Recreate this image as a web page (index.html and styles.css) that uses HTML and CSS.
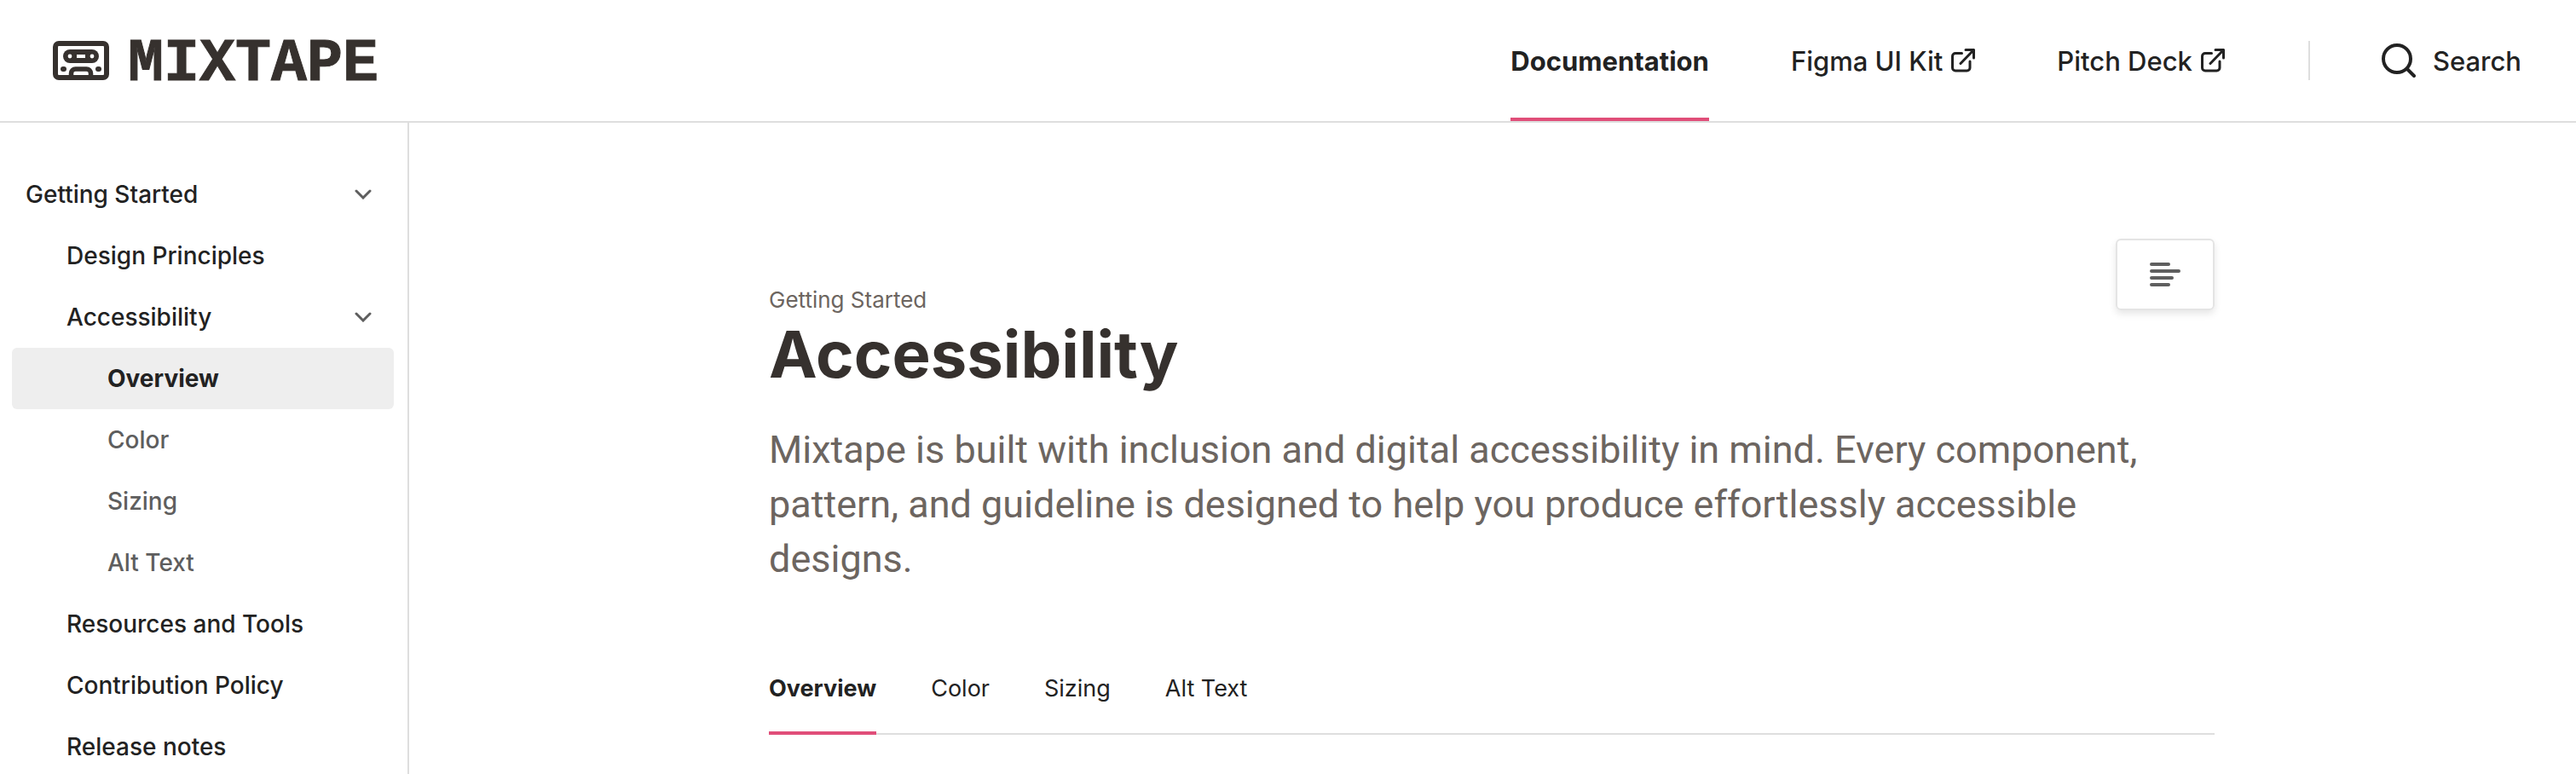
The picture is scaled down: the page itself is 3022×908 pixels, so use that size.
FILE: index.html
```html
<!DOCTYPE html>
<html lang="en">
<head>
  <meta charset="UTF-8" />
  <meta name="viewport" content="width=device-width, initial-scale=1.0"/>
  <title>Accessibility | Mixtape</title>
  <link rel="stylesheet" href="styles.css">
</head>
<body>

<header class="site-header">
  <a class="logo" href="#">
    <svg class="logo-icon" width="66" height="46" viewBox="0 0 66 46" fill="none" aria-hidden="true">
      <rect x="3" y="3" width="60" height="40" rx="4" stroke="currentColor" stroke-width="6"/>
      <rect x="12" y="10" width="42" height="16" rx="8" fill="currentColor"/>
      <circle cx="20" cy="18" r="2.4" fill="#fff"/>
      <circle cx="46" cy="18" r="2.4" fill="#fff"/>
      <rect x="28" y="16" width="10" height="4" fill="#fff"/>
      <rect x="9" y="30" width="7" height="6" rx="3" fill="currentColor"/>
      <rect x="50" y="30" width="7" height="6" rx="3" fill="currentColor"/>
      <path d="M21.500 42v-4a5 5 0 0 1 5-5h13a5 5 0 0 1 5 5v4" stroke="currentColor" stroke-width="5.500"/>
    </svg>
    <span class="logo-text">MIXTAPE</span>
  </a>
  <nav class="main-nav">
    <ul>
      <li><a class="active" href="#docs">Documentation</a></li>
      <li>
        <a href="#figma">Figma UI Kit
          <svg width="28" height="28" viewBox="0 0 28 28" aria-hidden="true"><path d="M12.500 5.500H5a3.500 3.500 0 0 0-3.500 3.500v13.500A3.500 3.500 0 0 0 5 26h13.500a3.500 3.500 0 0 0 3.500-3.500V15M17 1.500h9.500V11M26.500 1.500 11 17.500"/></svg>
        </a>
      </li>
      <li>
        <a href="#pitch">Pitch Deck
          <svg width="28" height="28" viewBox="0 0 28 28" aria-hidden="true"><path d="M12.500 5.500H5a3.500 3.500 0 0 0-3.500 3.500v13.500A3.500 3.500 0 0 0 5 26h13.500a3.500 3.500 0 0 0 3.500-3.500V15M17 1.500h9.500V11M26.500 1.500 11 17.500"/></svg>
        </a>
      </li>
    </ul>
    <button class="search" type="button">
      <svg width="40" height="40" viewBox="0 0 40 40" aria-hidden="true"><circle cx="18" cy="18" r="16"/><path d="m30 30 8 8"/></svg>
      Search
    </button>
  </nav>
</header>

<div class="layout">
  <nav class="sidebar">
    <ul>
      <li>
        <a href="#getting-started">Getting Started
          <svg width="20" height="12" viewBox="0 0 20 12" aria-hidden="true"><path d="m2 2 8 8 8-8"/></svg>
        </a>
        <ul>
          <li><a href="#principles">Design Principles</a></li>
          <li>
            <a href="#accessibility">Accessibility
              <svg width="20" height="12" viewBox="0 0 20 12" aria-hidden="true"><path d="m2 2 8 8 8-8"/></svg>
            </a>
            <ul>
              <li><a class="active" href="#overview">Overview</a></li>
              <li><a href="#color">Color</a></li>
              <li><a href="#sizing">Sizing</a></li>
              <li><a href="#alt-text">Alt Text</a></li>
            </ul>
          </li>
          <li><a href="#resources">Resources and Tools</a></li>
          <li><a href="#contribution">Contribution Policy</a></li>
          <li><a href="#release">Release notes</a></li>
        </ul>
      </li>
    </ul>
  </nav>

  <main class="content">
    <div class="page-head">
      <div class="page-title">
        <p class="crumb">Getting Started</p>
        <h1>Accessibility</h1>
      </div>
      <button class="toc-btn" type="button" aria-label="Table of contents">
        <svg width="36" height="28" viewBox="0 0 36 28" aria-hidden="true"><path d="M2 2h20M2 10h32M2 18h24M2 26h20"/></svg>
      </button>
    </div>
    <p class="lead">Mixtape is built with inclusion and digital accessibility in mind. Every component, pattern, and guideline is designed to help you produce effortlessly accessible designs.</p>
    <nav class="tabs">
      <a class="active" href="#overview">Overview</a>
      <a href="#color">Color</a>
      <a href="#sizing">Sizing</a>
      <a href="#alt-text">Alt Text</a>
    </nav>
  </main>
</div>

</body>
</html>
```
FILE: styles.css
```css
:root {
  --text: #222;
  --heading: #36312e;
  --muted: #6c6560;
  --grey: #5e5e5e;
  --border: #dedede;
  --accent: #e04e79;
}
* {
  box-sizing: border-box;
}
body {
  margin: 0;
  font-family: Inter, "Liberation Sans", sans-serif;
  font-size: 28px;
  color: var(--text);
  background: #fff;
}
a {
  color: inherit;
  text-decoration: none;
}
ul {
  list-style: none;
  margin: 0;
  padding: 0;
}
button {
  font: inherit;
  color: inherit;
  background: none;
  border: none;
  padding: 0;
  cursor: pointer;
}
svg {
  flex: none;
}
.site-header {
  display: flex;
  justify-content: space-between;
  height: 144px;
  padding: 0 64px 0 62px;
  border-bottom: 2px solid var(--border);
}
.logo {
  display: flex;
  align-items: center;
  gap: 22px;
  color: var(--heading);
}
.logo-text {
  padding-top: 10px;
  font-family: "Liberation Mono", monospace;
  font-size: 70px;
  font-weight: bold;
  line-height: 80px;
  -webkit-text-stroke: 1px currentColor;
}
.main-nav {
  display: flex;
  align-items: center;
  font-size: 31px;
  font-weight: 500;
}
.main-nav ul {
  display: flex;
  gap: 96px;
  height: 100%;
}
.main-nav a {
  display: flex;
  align-items: center;
  gap: 10px;
  height: 100%;
  padding-top: 4px;
  border-bottom: 4px solid transparent;
}
.main-nav a.active {
  font-weight: 700;
  border-color: var(--accent);
}
.main-nav svg {
  fill: none;
  stroke: currentColor;
  stroke-width: 3;
  stroke-linecap: round;
  stroke-linejoin: round;
}
.search {
  display: flex;
  align-items: center;
  gap: 20px;
  height: 46px;
  margin-left: 98px;
  padding-left: 84px;
  border-left: 2px solid var(--border);
}
.main-nav .search svg {
  stroke-width: 4;
}
.layout {
  display: flex;
}
.sidebar {
  flex: none;
  width: 480px;
  height: calc(100vh - 144px);
  margin-right: -2px;
  padding: 48px 16px 0 14px;
  border-right: 2px solid var(--border);
  font-weight: 500;
  overflow: hidden;
}
.sidebar a {
  display: flex;
  align-items: center;
  justify-content: space-between;
  height: 72px;
  padding: 0 26px 0 16px;
  border-radius: 6px;
}
.sidebar ul ul a {
  padding-left: 64px;
}
.sidebar ul ul ul a {
  padding-left: 112px;
  color: var(--grey);
}
.sidebar ul ul ul a.active {
  background: #eee;
  color: var(--text);
  font-weight: 700;
}
.sidebar svg {
  fill: none;
  stroke: var(--grey);
  stroke-width: 3;
  stroke-linecap: round;
}
.content {
  flex: 1;
  max-width: 1696px;
  margin: 0 auto;
  padding-top: 136px;
}
.page-head {
  display: flex;
  justify-content: space-between;
  align-items: flex-start;
}
.page-title {
  padding-top: 52px;
}
.crumb {
  margin: 0;
  font-size: 26px;
  line-height: 40px;
  color: var(--muted);
}
h1 {
  margin: 0;
  font-size: 76px;
  font-weight: 700;
  line-height: 86px;
  color: var(--heading);
}
.toc-btn {
  display: flex;
  align-items: center;
  justify-content: center;
  width: 116px;
  height: 84px;
  border: 2px solid #e4e4e4;
  border-radius: 6px;
  box-shadow: 0 4px 8px rgba(0,0,0,0.1);
}
.toc-btn svg {
  fill: none;
  stroke: var(--grey);
  stroke-width: 4;
  stroke-linecap: round;
}
.lead {
  margin: 38px 0 0;
  font-family: Roboto, Inter, sans-serif;
  font-size: 45px;
  line-height: 64px;
  color: var(--muted);
}
.tabs {
  display: flex;
  gap: 64px;
  margin-top: 90px;
  border-bottom: 2px solid var(--border);
  font-size: 27px;
}
.tabs a {
  height: 84px;
  margin-bottom: -2px;
  line-height: 60px;
  border-bottom: 4px solid transparent;
}
.tabs a.active {
  font-weight: 700;
  border-color: var(--accent);
}
```
